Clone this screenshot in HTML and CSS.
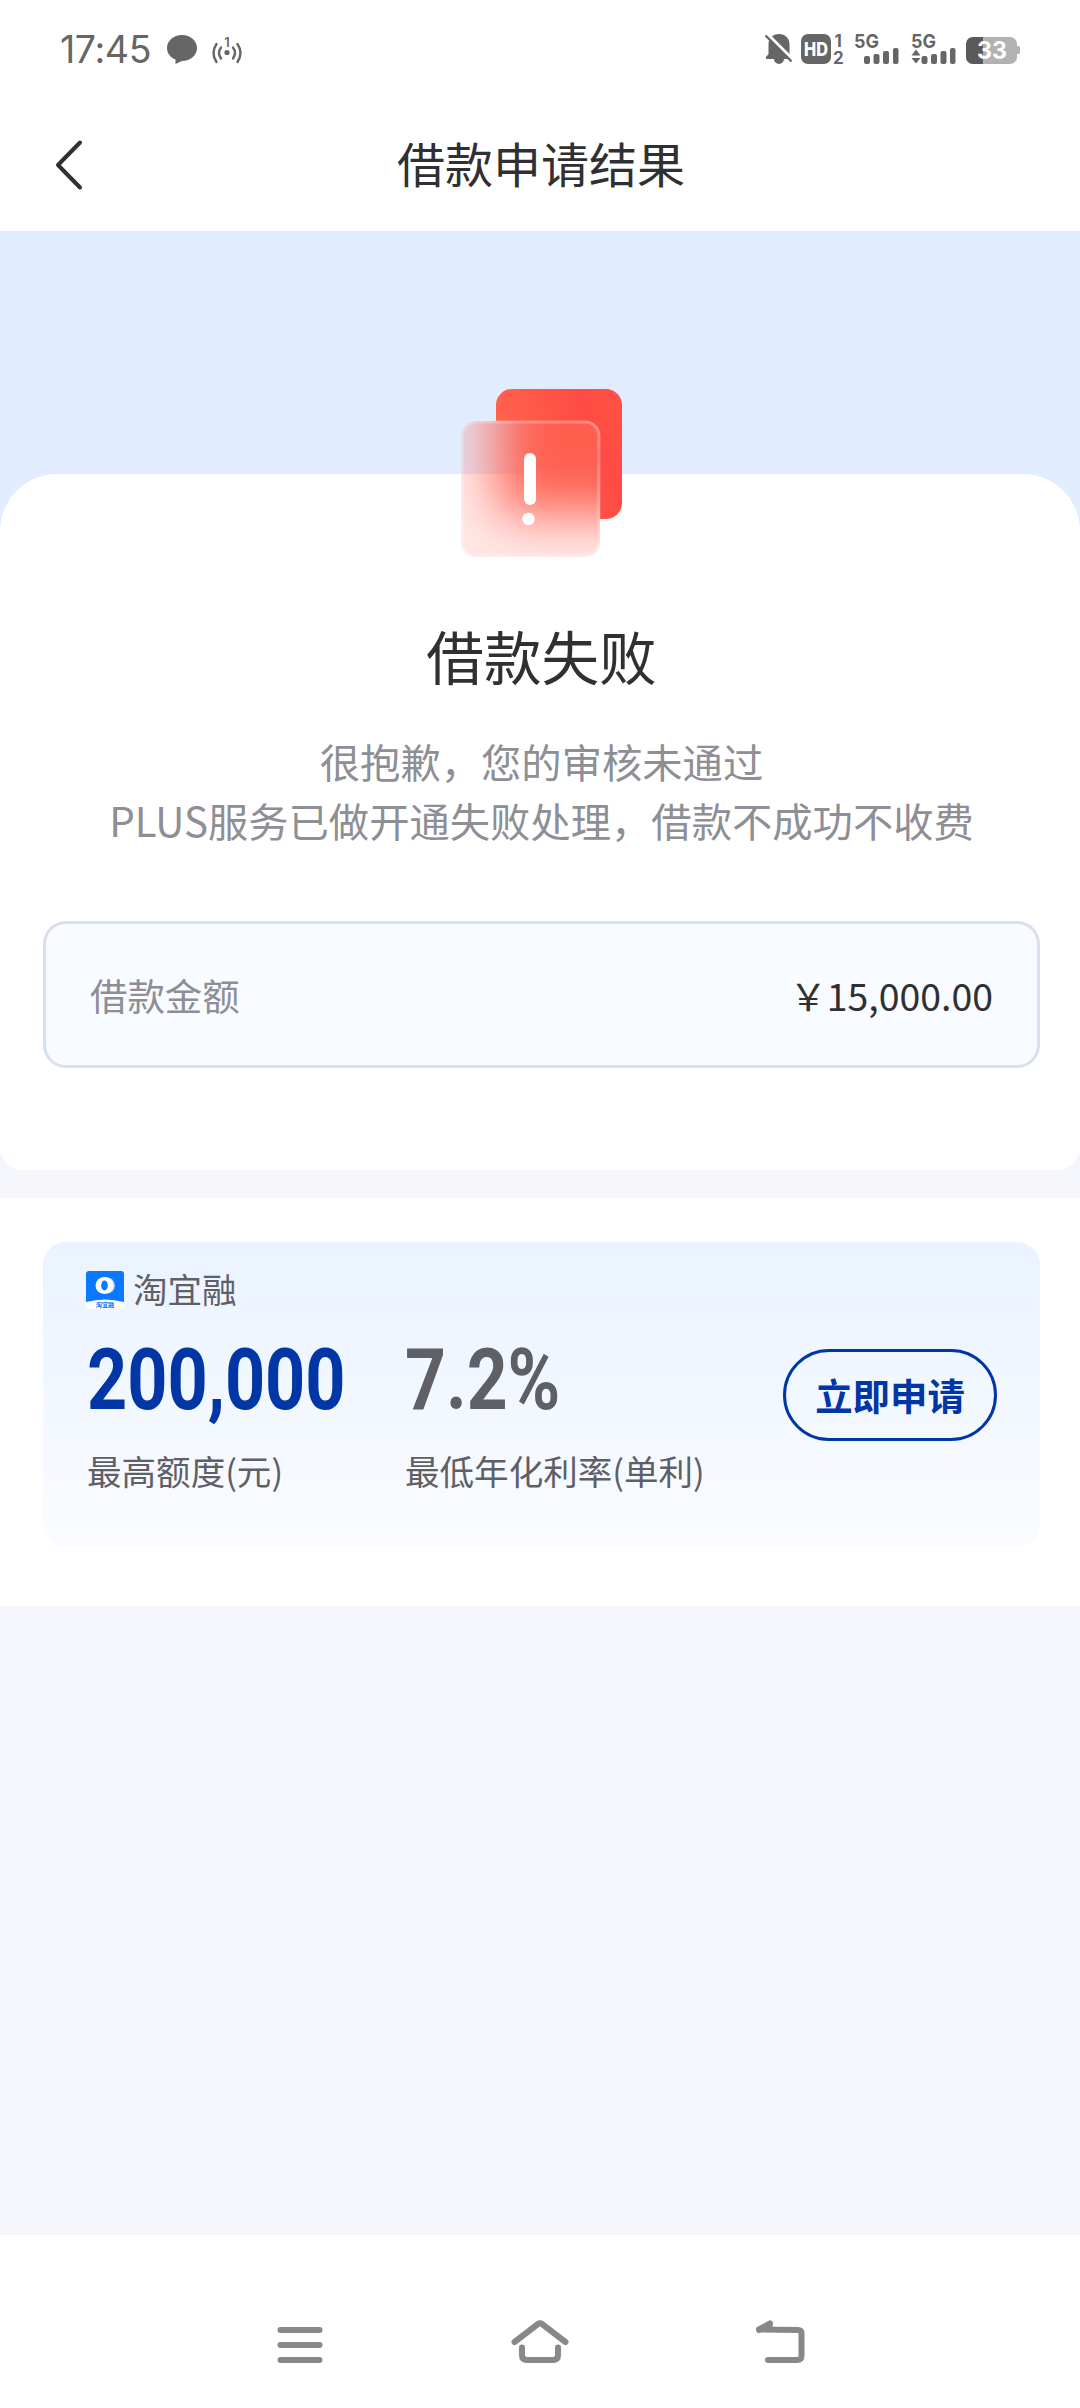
FILE: index.html
```html
<!DOCTYPE html>
<html lang="zh-CN">
<head>
<meta charset="utf-8">
<title>借款申请结果</title>
<link rel="stylesheet" href="styles.css">
</head>
<body>
<div class="app">
  <div class="status">
    <span class="clock">17:45</span>
    <svg class="status-left" width="90" height="40" viewBox="160 30 90 40">
      <path fill="#666" d="M182 35c8.600 0 15 5.800 15 13s-6.400 13-15 13l-6.500 3v-4.500C170.500 57.500 167 53.500 167 48c0-7.200 6.400-13 15-13z"/>
      <g fill="none" stroke="#666" stroke-width="2.400" stroke-linecap="round">
        <path d="M216.500 44q-6 9 0 18M221 47.500q-4 5.500 0 11M237.500 44q6 9 0 18M233 47.500q4 5.500 0 11"/>
      </g>
      <circle cx="227" cy="52.500" r="2.600" fill="#666"/>
      <text x="227" y="46.500" class="tiny" font-size="13" text-anchor="middle">1</text>
    </svg>
    <svg class="status-right" width="270" height="40" viewBox="760 30 270 40">
      <path fill="#666" d="M779 34c6.500 0 10.500 4.500 10.500 10.500V54l2 3v2h-7.500a5 5 0 0 1-10 0h-8v-2l2.500-3V44.500C768.500 38.500 772.500 34 779 34z"/>
      <path d="M767.500 34 793.500 60" stroke="#fff" stroke-width="3" fill="none"/>
      <path d="M765.500 35.500 791.500 61.500" stroke="#666" stroke-width="2.400" fill="none"/>
      <rect x="801" y="34" width="30" height="30" rx="7" fill="#666"/>
      <text x="804" y="56" class="hd" font-size="19" textLength="24" lengthAdjust="spacingAndGlyphs">HD</text>
      <text x="834.500" y="46.500" class="net" font-size="17">1</text>
      <text x="833" y="63.500" class="net" font-size="17">2</text>
      <text x="854" y="48" class="net" font-size="19" textLength="25" lengthAdjust="spacingAndGlyphs">5G</text>
      <g fill="#666">
        <rect x="864" y="56" width="6" height="8" rx="2"/><rect x="873.500" y="54" width="6" height="10" rx="2"/><rect x="883" y="51" width="6" height="13" rx="2"/><rect x="893" y="48" width="5.500" height="16" rx="2"/>
        <rect x="921.500" y="56" width="6" height="8" rx="2"/><rect x="931" y="54" width="6" height="10" rx="2"/><rect x="940.500" y="51" width="6" height="13" rx="2"/><rect x="950" y="48" width="5.500" height="16" rx="2"/>
        <path d="M911.500 55.500l4.500-6 4.500 6zM911.500 58l4.500 5.500 4.500-5.500z"/>
      </g>
      <text x="911" y="48" class="net" font-size="19" textLength="25" lengthAdjust="spacingAndGlyphs">5G</text>
      <rect x="966" y="37" width="51" height="27" rx="7" fill="#b2b2b2"/>
      <path fill="#b2b2b2" d="M1017 46h1.500q1.500 0 1.500 1.500v5q0 1.500-1.500 1.500H1017z"/>
      <path fill="#5a5a5a" d="M983 37h-10a7 7 0 0 0-7 7v13a7 7 0 0 0 7 7h10z"/>
      <text x="977" y="59" class="level" font-size="24" textLength="30" lengthAdjust="spacingAndGlyphs">33</text>
    </svg>
  </div>

  <header class="header">
    <svg class="back" width="30" height="52" viewBox="0 0 30 52"><path d="M26 3.500 4 26l22 22.500"/></svg>
    <h1 class="title">借款申请结果</h1>
  </header>

  <main class="main">
    <div class="hero">
      <section class="result">
        <svg class="alert" width="180" height="190" viewBox="450 380 180 190">
          <defs>
            <linearGradient id="red" x1="0" y1="0.700" x2="1" y2="0.300">
              <stop offset="0" stop-color="#ff6a50"/><stop offset="0.800" stop-color="#ff4b44"/><stop offset="1" stop-color="#ff5045"/>
            </linearGradient>
            <filter id="soft" x="-50%" y="-50%" width="200%" height="200%"><feGaussianBlur stdDeviation="27"/></filter>
            <clipPath id="pane"><rect x="461" y="421" width="139" height="136" rx="15"/></clipPath>
          </defs>
          <rect x="496" y="389" width="126" height="130" rx="16" fill="url(#red)"/>
          <g clip-path="url(#pane)">
            <path d="M461 421h139v53H461z" fill="#e1ecff"/>
            <path d="M461 474h139v83H461z" fill="#fff"/>
            <rect x="461" y="421" width="139" height="136" fill="#ff7a70" fill-opacity=".17"/>
            <rect x="498" y="350" width="170" height="164" fill="#ff5f50" filter="url(#soft)"/>
          </g>
          <rect x="462" y="422" width="137" height="134" rx="14" fill="none" stroke="#fff" stroke-opacity=".25" stroke-width="3"/>
          <rect x="524" y="453" width="12" height="52" rx="6" fill="#fff"/>
          <circle cx="528.500" cy="519" r="6.200" fill="#fff"/>
        </svg>
        <h2 class="result-title">借款失败</h2>
        <p class="result-text">很抱歉，您的审核未通过<br>PLUS服务已做开通失败处理，借款不成功不收费</p>
        <div class="amount">
          <span class="amount-label">借款金额</span>
          <span class="amount-value">￥15,000.00</span>
        </div>
      </section>
    </div>

    <section class="offers">
      <article class="offer">
        <div class="brand">
          <svg width="38" height="38" viewBox="0 0 38 38">
            <rect width="38" height="38" rx="3" fill="#fff"/>
            <path d="M0 3q0-3 3-3h32q3 0 3 3v28q-19-5-38 0z" fill="#0a78ff"/>
            <ellipse cx="21" cy="14.500" rx="8" ry="8" fill="#a9d0ff"/>
            <ellipse cx="18.500" cy="14.500" rx="9" ry="8.500" fill="#fff"/>
            <ellipse cx="18.500" cy="14.500" rx="3.300" ry="5" fill="#0a78ff"/>
            <text x="19" y="36" class="brand-mini" text-anchor="middle">淘宜融</text>
          </svg>
          <span class="brand-name">淘宜融</span>
        </div>
        <div class="offer-row">
          <div class="stat stat-limit">
            <strong class="num num-blue"><span class="squeeze">200,000</span></strong>
            <span class="stat-label">最高额度(元)</span>
          </div>
          <div class="stat">
            <strong class="num num-grey"><span class="squeeze">7.2%</span></strong>
            <span class="stat-label">最低年化利率(单利)</span>
          </div>
          <button class="apply">立即申请</button>
        </div>
      </article>
    </section>
  </main>

  <nav class="nav">
    <svg width="60" height="60" viewBox="270 2313 60 60"><path d="M280.500 2330h39M280.500 2345h39M280.500 2360h39"/></svg>
    <svg width="60" height="60" viewBox="510 2313 60 60"><path d="M514.500 2342 538 2324q2-1.500 4 0l23.500 18M522 2347.500V2355q0 5 5 5h26q5 0 5-5v-7.500"/></svg>
    <svg width="60" height="60" viewBox="750 2313 60 60"><path d="M770 2323.500 759 2329.500 798 2330q3.500 0 3.500 3.500v22q0 4.500-4.500 4.500h-29M759 2330l11-3"/></svg>
  </nav>
</div>
</body>
</html>
```

FILE: styles.css
```css
* { box-sizing: border-box; margin: 0; padding: 0; }
body {
  width: 1080px;
  font-family: "Noto Sans CJK SC", sans-serif;
  color: #303032;
  background: #fff;
}
.app { height: 2408px; display: flex; flex-direction: column; }
svg { display: block; flex: none; }

.status { height: 100px; display: flex; align-items: flex-start; padding: 30px 50px 0 60px; }
.clock { width: 100px; font: 400 37.500px/40px Inter, sans-serif; color: #666; letter-spacing: -0.400px; }
.status-right { margin-left: auto; }
.tiny, .net { font-family: Inter, sans-serif; fill: #666; font-weight: 600; }
.net { font-weight: 700; }
.hd, .level { font-family: Inter, sans-serif; fill: #fff; font-weight: 800; }
.level { font-weight: 700; }

.header { height: 131px; display: grid; grid-template-columns: 86px 1fr 86px; align-items: start; }
.back { margin: 39px 0 0 54px; fill: none; stroke: #303032; stroke-width: 4; stroke-linecap: round; stroke-linejoin: round; }
.title { margin-top: 26px; padding-left: 2px; text-align: center; font-size: 48px; font-weight: 400; line-height: 72px; }

.main { height: 2004px; background: #f4f6fb; }
.hero { padding-top: 243px; background: linear-gradient(#e1ecff 500px, #f4f6fb 500px); }
.result {
  height: 696px;
  padding: 0 40px 0 43px;
  background: #fff;
  border-radius: 57px 57px 23px 23px;
  display: flex;
  flex-direction: column;
  align-items: center;
}
.alert { margin: -94px 0 0 -3px; }
.result-title { margin-top: 43px; font-size: 57.600px; font-weight: 400; line-height: 84px; }
.result-text { margin-top: 34px; font-size: 40.320px; line-height: 59px; color: #8e8e95; text-align: center; white-space: nowrap; }
.amount {
  width: 100%;
  height: 147px;
  margin-top: 72px;
  padding: 0 44px;
  display: flex;
  align-items: center;
  justify-content: space-between;
  border: 3px solid #d8dfef;
  border-radius: 23px;
  background: #f8fbff;
  font-size: 37.440px;
}
.amount-label { color: #8e8e95; }

.offers { margin-top: 28px; height: 408px; padding: 44px 40px 0 43px; background: #fff; }
.offer { height: 305px; padding: 29px 43px 0; border-radius: 23px; background: linear-gradient(#eaf3ff, #fafcff); }
.brand { height: 38px; display: flex; align-items: center; gap: 9px; }
.brand-name { margin-top: -4px; font-size: 34.560px; line-height: 38px; color: #5f5f66; }
.brand-mini { font-size: 6.200px; font-weight: 700; fill: #0a78ff; }
.offer-row { display: flex; align-items: flex-start; margin-top: 28px; }
.stat { display: flex; flex-direction: column; padding-left: 1px; }
.stat-limit { width: 318px; }
.num { height: 84px; margin-top: 1px; font: 700 86px/84px Roboto, sans-serif; white-space: nowrap; }
.squeeze { display: inline-block; transform: scaleX(.815); transform-origin: 0 50%; }
.num-blue { color: #0036a5; }
.num-grey { color: #5f5f66; }
.num-grey .squeeze { transform: scaleX(.83); }
.stat-label { margin-top: 23px; font-size: 34.560px; line-height: 50px; color: #5f5f66; white-space: nowrap; }
.apply {
  width: 214px;
  height: 92px;
  margin: 12px 0 0 auto;
  border: 3px solid #0036a5;
  border-radius: 46px;
  background: transparent;
  font: 700 37.440px/50px "Noto Sans CJK SC", sans-serif;
  color: #0036a5;
  white-space: nowrap;
}

.nav { height: 173px; display: flex; justify-content: center; gap: 180px; padding-top: 78px; background: #fff; }
.nav svg { fill: none; stroke: #888; stroke-width: 6; stroke-linecap: round; stroke-linejoin: round; }
```
